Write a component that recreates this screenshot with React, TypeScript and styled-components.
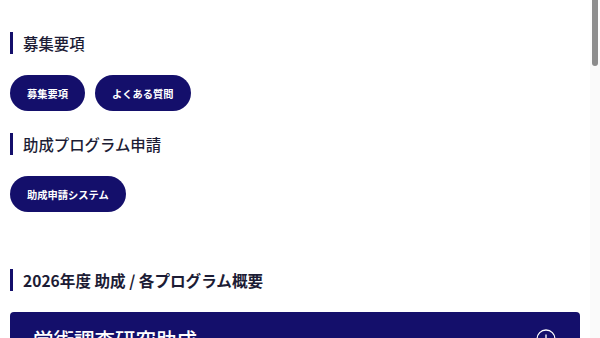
import React from "react";
import styled, { createGlobalStyle } from "styled-components";

const NAVY = "#140f6b";

const Global = createGlobalStyle`
  html, body { margin: 0; padding: 0; background: #ffffff; }
  body { font-family: "Noto Sans CJK JP", "Noto Sans", sans-serif; color: #1c1c35; }
`;

const Shell = styled.div`
  display: flex;
  align-items: flex-start;
`;

const ScrollRail = styled.div`
  position: sticky;
  top: 0;
  flex: 0 0 10px;
  height: 100vh;
  background: #fafafa;
  display: flex;
  justify-content: center;
`;

const ScrollThumb = styled.div`
  width: 6px;
  height: 66px;
  background: #8c8c8c;
  border-radius: 0 0 3px 3px;
`;

const Page = styled.main`
  flex: 1;
  display: flex;
  flex-direction: column;
  padding: 32px 10px 60px 10px;
`;

const Section = styled.section<{ $top?: number }>`
  display: flex;
  flex-direction: column;
  gap: 21px;
  margin-top: ${(p) => p.$top ?? 0}px;
`;

const Heading = styled.h2<{ $bold?: boolean }>`
  margin: 0;
  height: 22px;
  line-height: 22px;
  border-left: 3px solid ${NAVY};
  padding-left: 10px;
  font-size: ${(p) => (p.$bold ? 15.6 : 15.4)}px;
  font-weight: ${(p) => (p.$bold ? 700 : 500)};
  color: #1c1c35;
`;

const ButtonRow = styled.div`
  display: flex;
  gap: 10px;
`;

const PillButton = styled.a`
  display: inline-flex;
  align-items: center;
  justify-content: center;
  height: 36px;
  padding: 0 17px;
  border-radius: 18px;
  background: ${NAVY};
  color: #ffffff;
  font-size: 10.25px;
  font-weight: 700;
  text-decoration: none;
  white-space: nowrap;
`;

const CardList = styled.div`
  display: flex;
  flex-direction: column;
  gap: 16px;
`;

const Card = styled.div`
  display: flex;
  align-items: center;
  justify-content: space-between;
  background: ${NAVY};
  border-radius: 4px;
  padding: 12px 24px 12px 23px;
  color: #ffffff;
`;

const CardTitle = styled.h3`
  margin: 0;
  font-size: 20.5px;
  line-height: 30px;
  font-weight: 500;
  color: #ffffff;
`;

const CardBody = styled.div`
  height: 200px;
`;

const PlusIcon = () => (
  <svg width="20" height="20" viewBox="0 0 20 20" fill="none">
    <circle cx="10" cy="10" r="9" stroke="#ffffff" strokeWidth="1.3" />
    <path d="M10 5.5v9M5.5 10h9" stroke="#ffffff" strokeWidth="1.3" />
  </svg>
);

const programs = [
  "学術調査研究助成",
  "社会実装研究助成",
  "国際交流助成",
  "若手研究者支援助成",
  "地域連携プログラム",
  "特別研究助成",
];

export default function App() {
  return (
    <>
      <Global />
      <Shell>
        <Page>
          <Section>
            <Heading>募集要項</Heading>
            <ButtonRow>
              <PillButton href="#">募集要項</PillButton>
              <PillButton href="#">よくある質問</PillButton>
            </ButtonRow>
          </Section>
          <Section $top={22}>
            <Heading>助成プログラム申請</Heading>
            <ButtonRow>
              <PillButton href="#">助成申請システム</PillButton>
            </ButtonRow>
          </Section>
          <Section $top={57}>
            <Heading $bold>2026年度 助成 / 各プログラム概要</Heading>
            <CardList>
              {programs.map((t) => (
                <React.Fragment key={t}>
                  <Card>
                    <CardTitle>{t}</CardTitle>
                    <PlusIcon />
                  </Card>
                  <CardBody />
                </React.Fragment>
              ))}
            </CardList>
          </Section>
        </Page>
        <ScrollRail>
          <ScrollThumb />
        </ScrollRail>
      </Shell>
    </>
  );
}
